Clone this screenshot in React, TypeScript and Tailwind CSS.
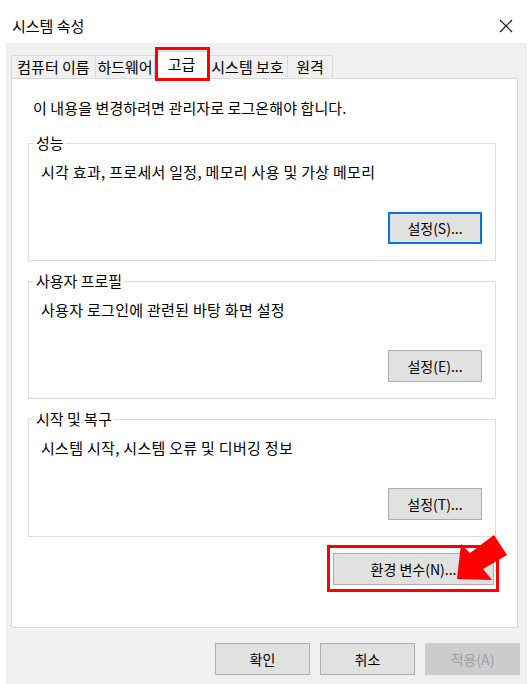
import React from "react";

const FONT = { fontFamily: '"Noto Sans CJK KR", "Noto Sans", sans-serif' };

function Btn({
  children,
  className = "",
}: {
  children: React.ReactNode;
  className?: string;
}) {
  return (
    <div
      className={
        "flex items-center justify-center h-[32px] bg-[#e1e1e1] border border-[#adadad] text-[14px] text-black " +
        className
      }
    >
      {children}
    </div>
  );
}

function Group({
  label,
  desc,
  btn,
  isDefault = false,
}: {
  label: string;
  desc: string;
  btn: string;
  isDefault?: boolean;
}) {
  return (
    <div className="relative h-[118px] border border-[#dcdcdc] flex flex-col pl-[12px] pt-[18px]">
      <span className="absolute top-[-11px] left-[5px] px-[2px] bg-white leading-[20px] text-[15px] text-black">
        {label}
      </span>
      <div className="leading-[20px] text-[15px] tracking-[0.3px] text-black">{desc}</div>
      <div className="mt-auto mb-[16px] mr-[13px] self-end">
        {isDefault ? (
          <div className="flex items-center justify-center w-[94px] h-[32px] bg-[#e1e1e1] border-2 border-[#0078d7] text-[14px] text-black">
            {btn}
          </div>
        ) : (
          <Btn className="w-[94px]">{btn}</Btn>
        )}
      </div>
    </div>
  );
}

export default function App() {
  const tabs = [
    { t: "컴퓨터 이름", w: 85 },
    { t: "하드웨어", w: 60 },
    { t: "고급", w: 53, sel: true },
    { t: "시스템 보호", w: 81 },
    { t: "원격", w: 46 },
  ];
  return (
    <div className="relative w-[532px] h-[684px] bg-white overflow-hidden" style={FONT}>
      {/* title bar */}
      <div className="h-[43px] flex items-center justify-between pl-[12px] pr-[19px]">
        <span className="text-[15px] text-black leading-[20px] mt-[9px]">시스템 속성</span>
        <svg width="14" height="14" viewBox="0 0 14 14" className="mt-[9px]">
          <path d="M1 1 L13 13 M13 1 L1 13" stroke="#111" strokeWidth="1.1" />
        </svg>
      </div>
      {/* body */}
      <div className="ml-[6px] mr-[5px] h-[641px] bg-[#f0f0f0] pt-[12px] pl-[5px] pr-[7px]">
        {/* tabs */}
        <div className="flex items-end h-[23px] relative z-10">
          {tabs.map((tab, i) =>
            tab.sel ? (
              <div
                key={i}
                style={{ width: tab.w }}
                className="h-[28px] mb-[-1px] bg-white border border-b-0 border-[#d9d9d9] flex items-center justify-center text-[15px] text-black"
              >
                <span className="mt-[-2px]">{tab.t}</span>
              </div>
            ) : (
              <div
                key={i}
                style={{ width: tab.w }}
                className="h-[23px] bg-[#f0f0f0] border border-b-0 border-[#d9d9d9] -ml-px first:ml-0 flex items-center justify-center text-[15px] text-black"
              >
                {tab.t}
              </div>
            )
          )}
        </div>
        {/* panel */}
        <div className="w-[507px] h-[550px] bg-white border border-[#d9d9d9] pt-[19px] pl-[16px] flex flex-col">
          <div className="pl-[5px] leading-[20px] text-[15px] tracking-[0.1px] text-black">
            이 내용을 변경하려면 관리자로 로그온해야 합니다.
          </div>
          <div className="w-[468px] mt-[25px] flex flex-col gap-[20px]">
            <Group
              label="성능"
              desc="시각 효과, 프로세서 일정, 메모리 사용 및 가상 메모리"
              btn="설정(S)..."
              isDefault
            />
            <Group label="사용자 프로필" desc="사용자 로그인에 관련된 바탕 화면 설정" btn="설정(E)..." />
            <Group label="시작 및 복구" desc="시스템 시작, 시스템 오류 및 디버깅 정보" btn="설정(T)..." />
          </div>
          <div className="w-[471px] mt-[8px] flex justify-end">
            <div className="border-[3px] border-[#ff0000] pt-[5px] pb-[4px] pl-[3px] pr-[2px]">
              <Btn className="w-[161px]">환경 변수(N)...</Btn>
            </div>
          </div>
        </div>
        {/* bottom buttons */}
        <div className="mt-[15px] flex justify-end gap-[10px]">
          <Btn className="w-[95px]">확인</Btn>
          <Btn className="w-[95px]">취소</Btn>
          <div className="flex items-center justify-center w-[95px] h-[32px] bg-[#cccccc] border border-[#cccccc] text-[14px] text-[#a0a0a0]">
            적용(A)
          </div>
        </div>
      </div>
      {/* annotation: red box on tab */}
      <div className="absolute left-[155px] top-[47px] w-[55px] h-[34px] border-[3px] border-[#ff0000] z-20" />
      {/* annotation: arrow */}
      <svg className="absolute left-0 top-0 z-20" width="532" height="684" viewBox="0 0 532 684" style={{ pointerEvents: "none" }}>
        <polygon
          points="457,579 461,544 470,553 494,535 507,555 483,569 492,580"
          fill="#ff0000"
        />
      </svg>
    </div>
  );
}
